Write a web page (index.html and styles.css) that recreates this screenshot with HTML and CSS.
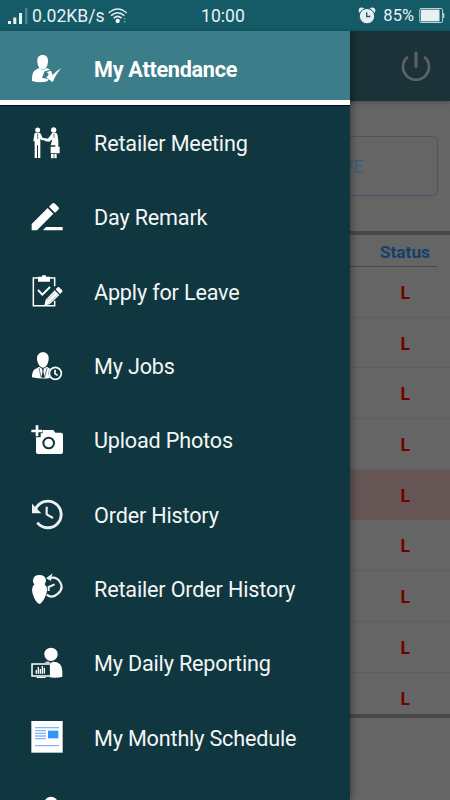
FILE: index.html
```html
<!DOCTYPE html>
<html lang="en">
<head>
<meta charset="utf-8">
<meta name="viewport" content="width=device-width">
<title>My Attendance</title>
<link rel="stylesheet" href="styles.css">
</head>
<body>
<div class="screen">
  <header class="statusbar">
    <div class="status-left">
      <svg class="signal" viewBox="0 0 20 18"><path d="M0 14h3v3H0zM5.300 10.500h3v6.500h-3zM11 6h3v11h-3z" fill="#e8f1f2"/><path d="M17 1h2.500v16H17z" fill="#4b8791"/></svg>
      <span class="speed">0.02KB/s</span>
      <svg class="wifi" viewBox="0 0 60 48" fill="none" stroke="#e3edef" stroke-width="4.500"><path d="M2 15Q29-9 56 15M9 23Q29 5 49 23M17 31Q29 19 41 31"/><circle cx="29" cy="39" r="6.500" fill="#fff" stroke="none"/><path d="M46 34l4-4 4 4zM46 40l4 4 4-4z" fill="#8bb0b7" stroke="none"/></svg>
    </div>
    <span class="time">10:00</span>
    <div class="status-right">
      <svg class="alarm" viewBox="0 0 54 50"><g fill="#e6eff1"><circle cx="11" cy="10" r="9"/><circle cx="43" cy="10" r="9"/></g><circle cx="27" cy="27" r="23" fill="#e6eff1" stroke="#145a67" stroke-width="3"/><path d="M26 15v13h11" fill="none" stroke="#145a67" stroke-width="4"/></svg>
      <span class="percent">85%</span>
      <svg class="battery" viewBox="0 0 78 46"><rect x="1.500" y="1.500" width="70" height="43" rx="4" fill="#145a67" stroke="#c6d7da" stroke-width="3"/><path d="M5 5h57v36H5z" fill="#e8f0f1"/><path d="M73 16h4v14h-4z" fill="#c6d7da"/></svg>
    </div>
  </header>
  <main class="page">
    <div class="appbar">
      <svg class="power" viewBox="0 0 90 90" fill="none" stroke="#5f6264" stroke-width="8"><path d="M20.500 17A39 39 0 1 0 69.500 17" /><path d="M45 2v48" stroke-width="9"/></svg>
    </div>
    <div class="actions"><button class="leave">LEAVE</button></div>
    <section class="table">
      <div class="thead"><span>Status</span></div>
      <div class="trow">L</div>
      <div class="trow">L</div>
      <div class="trow">L</div>
      <div class="trow">L</div>
      <div class="trow marked">L</div>
      <div class="trow">L</div>
      <div class="trow">L</div>
      <div class="trow">L</div>
      <div class="trow">L</div>
    </section>
  </main>
  <nav class="drawer">
    <a class="item active"><svg viewBox="33 37 96 96" fill="#fff"><path d="M68 43c11 0 17 8 16 20-1 13-6 23-16 23S53 76 52 63c-1-12 5-20 16-20z"/><path d="M57 82q11 10 23 0l11 5-17 5-8 19 20 5-4 6q-23 6-46-1-1-25 9-32z"/><path d="M80 94l13-4 5 13q13-14 27-21-17 17-27 43l-20-15q8-3 8-10z"/></svg><span>My Attendance</span></a>
    <a class="item"><svg viewBox="33 260 96 96" fill="#fff"><circle cx="53" cy="269" r="7.500"/><circle cx="101" cy="269" r="8"/><path d="M43 281q1-4 6-4h8q4 0 6 5l5 11 11 1v7l-15-2-3-4v58h-7v-38h-3v38h-7v-50h-4z"/><path d="M97 277h9q5 0 6 5l3 19v18h4v20H92v-20h14v-4H92l5-18-9 7-12-1v-7l9-2z"/><path d="M93 341h8v13h-8zM103 341h7v13h-7z"/><path d="M53 279v17M102 280v12" stroke="#10373f" stroke-width="2"/></svg><span>Retailer Meeting</span></a>
    <a class="item"><svg viewBox="33 33 96 96" fill="#fff"><path d="M35 102l48-48 17 17-49 50H35zM87 50l9-9q5-4 9 0l10 10q4 4 0 8l-10 9zM69 121l9-10h50v10z"/></svg><span>Day Remark</span></a>
    <a class="item"><svg viewBox="33 256 96 96"><path d="M54 265H40v83h64v-15M89 265h15v25" fill="none" stroke="#fff" stroke-width="4.500"/><path d="M54 261h11q0-5 7-5t7 5h11v15H54z" fill="#fff"/><path d="M54 301l13 14 23-23" fill="none" stroke="#fff" stroke-width="6"/><path d="M73 348l4-18 27-28 14 14-28 27zM107 299l6-6q3-2 6 1l7 7q3 3 0 6l-6 6z" fill="#fff"/><path d="M80 333l26-26M87 341l27-27" stroke="#10373f" stroke-width="1"/></svg><span>Apply for Leave</span></a>
    <a class="item"><svg viewBox="33 29 96 96" fill="#fff"><path d="M69 36c11 0 18 8 17 21-2 15-8 25-17 25s-16-10-18-25c-1-13 7-21 18-21z"/><path d="M57 79l11 8 13-8q5 5 10 6-8 7-5 18 1 7 5 10-27 4-55-2 0-18 8-24 10-4 13-8z"/><path d="M66 88l3-3 3 3-2 5 4 19H64l4-19z" fill="#10373f"/><path d="M57 83l6 27M81 83l-7 27" stroke="#10373f" stroke-width="2"/><circle cx="106" cy="99" r="18" fill="#10373f" stroke="#fff" stroke-width="5"/><path d="M105 88v12l8 5" fill="none" stroke="#fff" stroke-width="5"/></svg><span>My Jobs</span></a>
    <a class="item"><svg viewBox="33 253 96 96"><path d="M68 271h32l6 8h17q6 0 6 6v52q0 6-6 6H54q-6 0-6-6v-44h14V281h6z" fill="#fff"/><circle cx="86" cy="310" r="16" fill="#fff" stroke="#10373f" stroke-width="6"/><path d="M51 257v33M34 274h33" stroke="#fff" stroke-width="8"/></svg><span>Upload Photos</span></a>
    <a class="item"><svg viewBox="33 26 96 96"><path d="M47 59A40 40 0 1 1 52 100" fill="none" stroke="#ecf0f1" stroke-width="8.500"/><path d="M36 43v29h28z" fill="#ecf0f1"/><path d="M80 52v23l19 11" fill="none" stroke="#ecf0f1" stroke-width="6.500"/></svg><span>Order History</span></a>
    <a class="item"><svg viewBox="33 249 96 96"><path d="M86 266Q108 257 120 276T114 311T80 314" fill="none" stroke="#ecf0f1" stroke-width="6.500"/><path d="M78 265l20-15-3 9-2 14z" fill="#ecf0f1"/><path d="M86 303v-12l18-8" fill="none" stroke="#ecf0f1" stroke-width="6"/><path d="M58 255q18 0 20 16 0 7-4 12 11 10 5 28-8 24-20 31-13-5-20-28-7-20 4-31-5-6-4-12 2-16 19-16z" fill="#fff"/></svg><span>Retailer Order History</span></a>
    <a class="item"><svg viewBox="33 37 96 96"><circle cx="93" cy="59" r="20" fill="#fff"/><path d="M73 84q7-4 14-3 5 5 12 0 27 0 28 28v17q-16 5-39 2l5-4V84z" fill="#fff"/><path d="M36 88h56v36H36z" fill="#10373f" stroke="#fff" stroke-width="4.500"/><path d="M51 127h25l2 3H49z" fill="#fff"/><path d="M49 117v-11M55 117V97M61 117v-14M67 117V94M73 117v-18" stroke="#fff" stroke-width="4"/></svg><span>My Daily Reporting</span></a>
    <a class="item"><svg viewBox="33 260 96 96"><path d="M34 260h94v95H34z" fill="#fff"/><path d="M45 280h72M45 289h33M45 297h33M45 305h33M45 313h33M45 334h72" stroke="#7fb5fa" stroke-width="4"/><path d="M84 289h31v23H84z" fill="#3194fb"/></svg><span>My Monthly Schedule</span></a>
    <a class="item"><svg viewBox="33 483 96 96" fill="#fff"><circle cx="93" cy="505" r="20"/></svg></a>
  </nav>
</div>
</body>
</html>
```
FILE: styles.css
```css
* { box-sizing: border-box; }
body { margin: 0; font-family: Roboto, "Liberation Sans", sans-serif; }
svg { display: block; flex: none; }

.screen { position: relative; width: 450px; height: 800px; overflow: hidden; background: #656565; }

.statusbar {
  display: grid;
  grid-template-columns: 1fr auto 1fr;
  align-items: center;
  height: 31px;
  padding: 0 5px 0 8px;
  background: #145a67;
  color: #e8f1f2;
}
.status-left, .status-right { display: flex; align-items: center; }
.status-right { justify-content: flex-end; }
.signal { width: 20px; height: 18px; }
.speed { margin-left: 4px; font-size: 17.600px; }
.wifi { width: 20px; height: 16px; margin-left: 3px; }
.time { margin-right: 7px; padding-top: 1px; font-size: 17.600px; }
.alarm { width: 18px; height: 17px; }
.percent { margin: 0 5px 0 7px; font-size: 16.500px; }
.battery { width: 26px; height: 15px; }

.appbar {
  display: flex;
  justify-content: flex-end;
  align-items: center;
  height: 70px;
  padding-right: 19px;
  background: #1a3238;
  box-shadow: 0 1px 4px rgba(0, 0, 0, .3);
}
.power { width: 30px; height: 30px; }

.actions { height: 130px; padding: 35px 12px 0; }
.leave {
  display: block;
  width: 100%;
  height: 60px;
  padding: 1px 74px 0 0;
  border: 1px solid #43586f;
  border-radius: 5px;
  background: none;
  color: #4a5f74;
  font: bold 17.500px Roboto, sans-serif;
  text-align: right;
}

.table {
  height: 487px;
  overflow: hidden;
  border-top: 4px solid #484848;
  border-bottom: 4px solid #484848;
}
.thead {
  height: 32px;
  margin: 0 13px;
  padding: 7px 7px 0 0;
  border-bottom: 1px solid #484848;
  color: #12406b;
  font-size: 17.300px;
  font-weight: bold;
  line-height: 21px;
  text-align: right;
}
.trow {
  height: 50.700px;
  padding: 1px 40px 0 0;
  border-bottom: 1px solid #5d5d5d;
  color: #720000;
  font-size: 17.500px;
  font-weight: bold;
  line-height: 50px;
  text-align: right;
}
.trow.marked { background: #655555; }

.drawer {
  position: absolute;
  top: 31px;
  left: 0;
  width: 350px;
  height: 769px;
  overflow: hidden;
  background: #10373f;
  box-shadow: 1px 0 8px rgba(0, 0, 0, .45);
  clip-path: inset(0 -14px 0 0);
}
.item {
  display: flex;
  align-items: center;
  height: 74.350px;
  padding-left: 31px;
  color: #f3f6f6;
  font-size: 21.600px;
  letter-spacing: -.17px;
}
.item svg { width: 32px; height: 32px; }
.item span { margin-left: 31px; padding-top: 2px; white-space: nowrap; }
.item.active {
  padding-top: 6px;
  border-bottom: 5px solid #fff;
  background: #3b7d89;
  color: #fff;
  font-weight: bold;
  letter-spacing: -.27px;
  box-shadow: 0 1px 0 #020f20;
}
```
